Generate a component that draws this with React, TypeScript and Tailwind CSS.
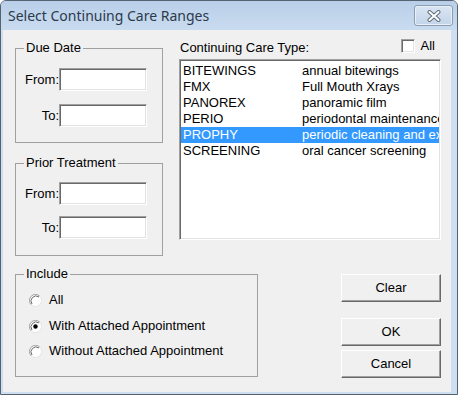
import type { ReactNode } from 'react'

const careTypes = [
  { code: 'BITEWINGS', desc: 'annual bitewings' },
  { code: 'FMX', desc: 'Full Mouth Xrays' },
  { code: 'PANOREX', desc: 'panoramic film' },
  { code: 'PERIO', desc: 'periodontal maintenance' },
  { code: 'PROPHY', desc: 'periodic cleaning and exam' },
  { code: 'SCREENING', desc: 'oral cancer screening' },
]

function Group({ title, className, children }: { title: string; className: string; children: ReactNode }) {
  return (
    <fieldset className={`border border-[#a0a0a0] ${className}`}>
      <legend className="ml-[8px] px-[2px] leading-[16px]">{title}</legend>
      {children}
    </fieldset>
  )
}

function Edit() {
  return (
    <div className="w-[88px] h-[23px] bg-white border border-t-[#a0a0a0] border-l-[#a0a0a0] border-r-white border-b-white shadow-[inset_1px_1px_0_#696969,inset_-1px_-1px_0_#e3e3e3]" />
  )
}

function DateRow({ label, className }: { label: string; className: string }) {
  return (
    <div className={`flex items-center ${className}`}>
      <span className="w-[43px] text-right leading-[16px]">{label}</span>
      <Edit />
    </div>
  )
}

function Radio({ label, checked, className }: { label: string; checked?: boolean; className: string }) {
  return (
    <div className={`flex items-center h-[16px] ${className}`}>
      <svg width="13" height="13" viewBox="0 0 13 13">
        <circle cx="6.5" cy="6.5" r="6" fill="#fff" />
        <path d="M2.2 10.8 A6 6 0 0 1 10.8 2.2" fill="none" stroke="#a0a0a0" strokeWidth="1" />
        <path d="M3 10 A5 5 0 0 1 10 3" fill="none" stroke="#696969" strokeWidth="1" />
        <path d="M10.8 2.2 A6 6 0 0 1 2.2 10.8" fill="none" stroke="#e3e3e3" strokeWidth="1" />
        {checked && <circle cx="6.5" cy="6.5" r="2.2" fill="#000" />}
      </svg>
      <span className="ml-[7px] leading-[16px]">{label}</span>
    </div>
  )
}

function Button({ label, className }: { label: string; className: string }) {
  return (
    <button className={`w-[100px] h-[28px] bg-[#f0f0f0] border border-t-white border-l-white border-r-[#696969] border-b-[#696969] shadow-[inset_-1px_-1px_0_#a0a0a0] leading-[16px] ${className}`}>
      {label}
    </button>
  )
}

export default function App() {
  return (
    <div className="w-[458px] h-[395px] flex flex-col bg-[#cfdef0] border border-[#55626f] rounded-t-[6px] overflow-hidden font-['Liberation_Sans',Arial,sans-serif] text-[13px] text-black">
      {/* title bar */}
      <div className="h-[29px] flex items-start bg-gradient-to-b from-[#b9cfe9] to-[#c9dbef]">
        <span className="ml-[7px] pt-[3px] leading-[24px] text-[14px] text-[#2c3a4c] font-['Noto_Sans',sans-serif]">
          Select Continuing Care Ranges
        </span>
        <div className="ml-auto mr-[4px] mt-[4px] w-[39px] h-[21px] rounded-[3px] border border-[#8c9db3] bg-gradient-to-b from-[#d9e5f3] to-[#c3d5ea] shadow-[inset_0_0_0_1px_#e8f0f9] flex items-center justify-center">
          <svg width="14" height="12" viewBox="0 0 14 12">
            <path d="M2.5 2 L11.5 10 M11.5 2 L2.5 10" stroke="#5e6b7a" strokeWidth="4" strokeLinecap="round" />
            <path d="M2.5 2 L11.5 10 M11.5 2 L2.5 10" stroke="#fff" strokeWidth="2" strokeLinecap="round" />
          </svg>
        </div>
      </div>

      {/* client area */}
      <div className="flex-1 ml-[2px] mr-[6px] mb-[2px] bg-[#f0f0f0] flex flex-col">
        <div className="flex h-[226px]">
          <div className="ml-[12px] mt-[10px] flex flex-col">
            <Group title="Due Date" className="w-[148px] h-[103px]">
              <DateRow label="From:" className="mt-[12px]" />
              <DateRow label="To:" className="mt-[13px]" />
            </Group>
            <Group title="Prior Treatment" className="w-[148px] h-[101px] mt-[12px]">
              <DateRow label="From:" className="mt-[11px]" />
              <DateRow label="To:" className="mt-[11px]" />
            </Group>
          </div>

          <div className="ml-[16px] mt-[9px] w-[262px] flex flex-col">
            <div className="h-[20px] flex items-start">
              <span className="mt-[1px] ml-[1px] leading-[16px]">Continuing Care Type:</span>
              <div className="ml-auto mr-[6px] flex items-start">
                <div className="w-[14px] h-[14px] bg-white border border-t-[#a0a0a0] border-l-[#a0a0a0] border-r-white border-b-white shadow-[inset_1px_1px_0_#696969,inset_-1px_-1px_0_#e3e3e3]" />
                <span className="ml-[6px] leading-[16px] -mt-[1px]">All</span>
              </div>
            </div>
            <div className="h-[181px] bg-white border border-t-[#a0a0a0] border-l-[#a0a0a0] border-r-white border-b-white shadow-[inset_1px_1px_0_#696969,inset_-1px_-1px_0_#e3e3e3] pt-[3px] pl-[1px] pr-[1px] overflow-hidden">
              {careTypes.map((t, i) => (
                <div
                  key={t.code}
                  className={`flex h-[16px] leading-[16px] whitespace-nowrap overflow-hidden px-[2px] ${
                    i === 4 ? 'bg-[#3399ff] text-white' : ''
                  }`}
                >
                  <span className="w-[119px] shrink-0">{t.code}</span>
                  <span>{t.desc}</span>
                </div>
              ))}
            </div>
          </div>
        </div>

        <div className="flex mt-[10px]">
          <Group title="Include" className="ml-[12px] w-[243px] h-[111px]">
            <div className="pl-[13px]">
              <Radio label="All" className="mt-[10px]" />
              <Radio label="With Attached Appointment" checked className="mt-[10px]" />
              <Radio label="Without Attached Appointment" className="mt-[9px]" />
            </div>
          </Group>
          <div className="ml-auto mr-[10px] mt-[8px] flex flex-col">
            <Button label="Clear" className="" />
            <Button label="OK" className="mt-[16px]" />
            <Button label="Cancel" className="mt-[4px]" />
          </div>
        </div>
      </div>
    </div>
  )
}
